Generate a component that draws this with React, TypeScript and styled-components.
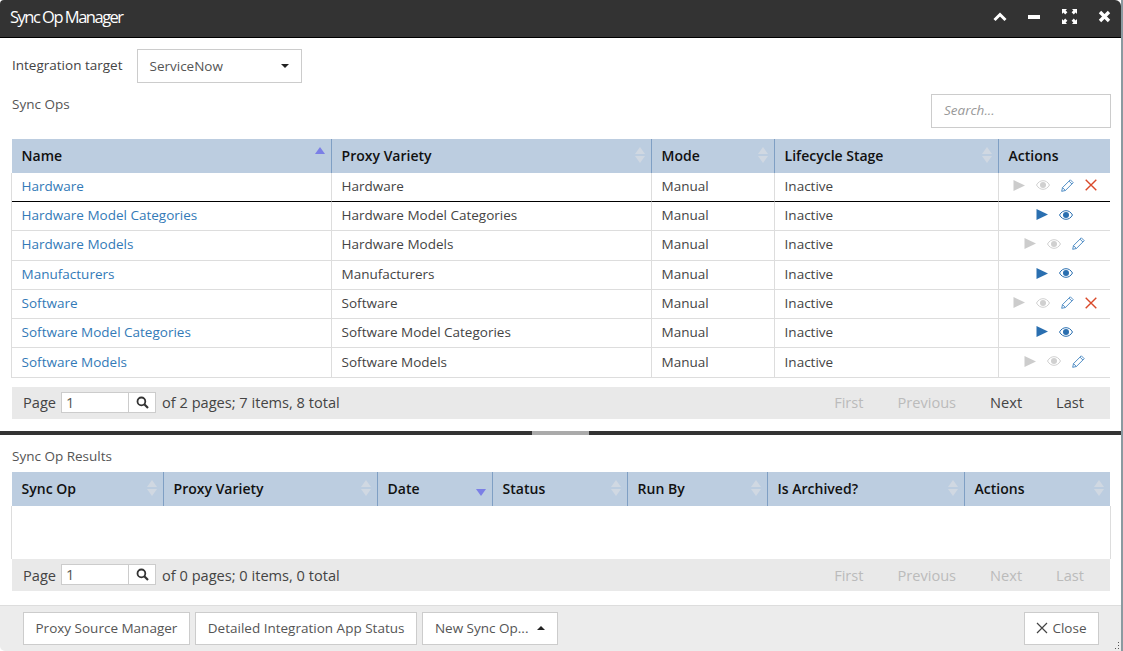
import React from 'react';
import styled, { createGlobalStyle } from 'styled-components';

const GlobalStyle = createGlobalStyle`
  html, body {
    margin: 0;
    padding: 0;
    background: #fff;
  }
  body {
    font-family: "Open Sans", "Liberation Sans", sans-serif;
    font-size: 13.5px;
    color: #333;
  }
`;

const Win = styled.div`
  width: 1123px;
  height: 651px;
  box-sizing: border-box;
  border-right: 2px solid #8a9aa0;
  background: #fff;
  display: flex;
  flex-direction: column;
  overflow: hidden;
  position: relative;
`;

const TitleBar = styled.div`
  height: 38px;
  flex: none;
  box-sizing: border-box;
  background: #333;
  border-bottom: 1px solid #000;
  border-radius: 4px 6px 0 0;
  display: flex;
  align-items: center;
  justify-content: space-between;
  padding: 0 10px 4px 10px;
`;

const Title = styled.div`
  color: #fff;
  font-size: 16.5px;
  letter-spacing: -1.5px;
`;

const TitleIcons = styled.div`
  display: flex;
  align-items: center;
  gap: 21.5px;
`;

const TopPane = styled.div`
  height: 393px;
  flex: none;
  box-sizing: border-box;
  padding: 11px 10px 0 12px;
  display: flex;
  flex-direction: column;
`;

const TargetRow = styled.div`
  display: flex;
  align-items: center;
  gap: 15px;
  height: 34px;
  flex: none;
`;

const FieldLabel = styled.span`
  color: #444;
  font-size: 13.5px;
  margin-top: -3px;
`;

const Select = styled.div`
  width: 165px;
  height: 34px;
  box-sizing: border-box;
  border: 1px solid #ccc;
  padding: 0 12px 1px 11px;
  display: flex;
  align-items: center;
  justify-content: space-between;
  font-size: 13.5px;
  color: #555;
`;

const Caret = styled.span<{ $up?: boolean }>`
  width: 0;
  height: 0;
  border-left: 4.5px solid transparent;
  border-right: 4.5px solid transparent;
  ${(p) => (p.$up ? 'border-bottom: 4.5px solid #222;' : 'border-top: 4.5px solid #222;')}
`;

const MenuCaret = styled(Caret)`
  margin-left: 5px;
`;

const OpsHead = styled.div`
  display: flex;
  justify-content: space-between;
  height: 45px;
  flex: none;
  margin-top: 11px;
`;

const SectionLabel = styled.div`
  color: #555;
  font-size: 13.5px;
  line-height: 18px;
`;

const OpsLabel = styled(SectionLabel)`
  margin-top: 1px;
`;

const SearchBox = styled.div`
  width: 180px;
  height: 34px;
  box-sizing: border-box;
  border: 1px solid #ccc;
  padding: 0 12px 2px;
  display: flex;
  align-items: center;
  font-size: 13.5px;
  font-style: italic;
  color: #999;
`;

const Table = styled.table`
  width: 1098px;
  flex: none;
  border-collapse: separate;
  border-spacing: 0;
  table-layout: fixed;
`;

const Th = styled.th`
  position: relative;
  height: 34px;
  box-sizing: border-box;
  padding: 0 9.6px 2px;
  background: #bccde0;
  border-right: 1px solid #7f9fc4;
  text-align: left;
  font-size: 14px;
  font-weight: 600;
  color: #111;
  &:last-child {
    border-right: none;
  }
`;

const Td = styled.td<{ $strong?: boolean }>`
  height: ${(p) => (p.$strong ? 29 : 29.3)}px;
  box-sizing: border-box;
  padding: 0 9.6px ${(p) => (p.$strong ? 2.5 : 2)}px;
  border-right: 1px solid #ddd;
  border-bottom: 1px solid ${(p) => (p.$strong ? '#000' : '#ddd')};
  font-size: 13.5px;
  color: #444;
  white-space: nowrap;
  &:first-child {
    box-shadow: -1px 0 0 #ddd;
  }
  &:last-child {
    border-right: none;
  }
`;

const NameLink = styled.a`
  color: #337ab7;
  text-decoration: none;
`;

const ActionsWrap = styled.div`
  display: flex;
  justify-content: center;
  align-items: center;
  gap: 11px;
  height: 100%;
  margin-top: -1px;
`;

const Sort = styled.span`
  position: absolute;
  right: 6px;
  top: 8px;
  display: flex;
  flex-direction: column;
  gap: 2px;
`;

const Tri = styled.span<{ $dir: 'up' | 'down'; $on?: boolean; $off?: boolean }>`
  width: 0;
  height: 0;
  border-left: 5px solid transparent;
  border-right: 5px solid transparent;
  visibility: ${(p) => (p.$off ? 'hidden' : 'visible')};
  ${(p) =>
    `border-${p.$dir === 'up' ? 'bottom' : 'top'}: 7.5px solid ${p.$on ? '#7b7fe6' : '#d0d8e2'};`}
`;

const Pager = styled.div<{ $gap: number }>`
  width: 1098px;
  height: 32px;
  flex: none;
  margin-top: ${(p) => p.$gap}px;
  background: #e9e9e9;
  display: flex;
  align-items: center;
  justify-content: space-between;
  padding: 0 26px 1px 11px;
  box-sizing: border-box;
`;

const PagerLeft = styled.div`
  display: flex;
  align-items: center;
  font-size: 14.6px;
  color: #444;
`;

const PageInput = styled.div`
  width: 68px;
  height: 21px;
  box-sizing: border-box;
  margin-left: 5px;
  background: #fff;
  border: 1px solid #ccc;
  padding-left: 4px;
  line-height: 19px;
  color: #555;
`;

const PageSearch = styled.div`
  width: 27px;
  height: 21px;
  box-sizing: border-box;
  background: #fff;
  border: 1px solid #ccc;
  border-left: none;
  margin-right: 6px;
  display: flex;
  align-items: center;
  justify-content: center;
`;

const PagerNav = styled.div`
  display: flex;
  gap: 34px;
`;

const NavItem = styled.span<{ $off?: boolean }>`
  font-size: 14.6px;
  color: ${(p) => (p.$off ? '#bbb' : '#444')};
`;

const Splitter = styled.div`
  height: 4px;
  flex: none;
  background: #333;
  display: flex;
  justify-content: center;
`;

const SplitHandle = styled.div`
  width: 57px;
  height: 100%;
  background: #aaa;
  margin-right: 1px;
`;

const BottomPane = styled.div`
  flex: 1;
  box-sizing: border-box;
  padding: 12px 12px 0;
  display: flex;
  flex-direction: column;
`;

const ResultsLabel = styled(SectionLabel)`
  height: 25px;
  flex: none;
`;

const EmptyBody = styled.div`
  width: 1098px;
  height: 53px;
  flex: none;
  box-shadow: -1px 0 0 #ddd, 1px 0 0 #ddd;
`;

const Footer = styled.div`
  height: 46px;
  flex: none;
  box-sizing: border-box;
  background: #ececec;
  border-top: 1px solid #ddd;
  border-bottom-left-radius: 5px;
  padding: 6px 22px 0 23px;
  display: flex;
  align-items: flex-start;
  gap: 5.5px;
  position: relative;
`;

const FootBtn = styled.div<{ $push?: boolean }>`
  height: 33px;
  box-sizing: border-box;
  background: #fff;
  border: 1px solid #ccc;
  padding: 0 11.5px 2px;
  display: flex;
  align-items: center;
  gap: 4px;
  font-size: 13.5px;
  color: #555;
  white-space: nowrap;
  ${(p) => (p.$push ? 'margin-left: auto;' : '')}
`;

const Grip = styled.span`
  position: absolute;
  right: 1px;
  bottom: 2px;
  width: 11px;
  height: 11px;
`;

const Play = ({ on }: { on: boolean }) => (
  <svg width="12" height="13" viewBox="0 0 12 13">
    <path d="M.5 1 12 6.5.5 12Z" fill={on ? '#2a6fb0' : '#ccc'} />
  </svg>
);

const Eye = ({ on }: { on: boolean }) => {
  const c = on ? '#2a6fb0' : '#d0d0d0';
  return (
    <svg width="14" height="10" viewBox="0 0 14 10">
      <path d="M.5 5C2.2 2 4.4.7 7 .7S11.8 2 13.5 5C11.8 8 9.6 9.3 7 9.3S2.2 8 .5 5Z" fill="none" stroke={c} strokeWidth="1" />
      <circle cx="7" cy="5" r="3" fill={c} />
    </svg>
  );
};

const Pencil = () => (
  <svg width="13" height="13" viewBox="0 0 13 13">
    <path d="M.7 12.3 1.5 8.6 9.3.8 12.2 3.7 4.4 11.5Z M8 2.1 10.9 5 M1.5 8.6 4.4 11.5" fill="none" stroke="#3f82c0" strokeWidth="0.9" strokeLinejoin="round" />
  </svg>
);

const Cross = () => (
  <svg width="12" height="12" viewBox="0 0 12 12">
    <path d="M.7.7 11.3 11.3 M11.3.7.7 11.3" stroke="#d9492a" strokeWidth="1.4" />
  </svg>
);

const Magnifier = () => (
  <svg width="13" height="13" viewBox="0 0 13 13">
    <circle cx="5.4" cy="5.4" r="3.9" fill="none" stroke="#333" strokeWidth="1.8" />
    <path d="M8.3 8.3 12 12" stroke="#333" strokeWidth="2.2" />
  </svg>
);

const columnsTop = [320, 320, 123, 224, 111];
const columnsBottom = [152, 214, 115, 135, 140, 197, 145];

type Row = { name: string; kind: 'all' | 'run' | 'edit' };

const rows: Row[] = [
  { name: 'Hardware', kind: 'all' },
  { name: 'Hardware Model Categories', kind: 'run' },
  { name: 'Hardware Models', kind: 'edit' },
  { name: 'Manufacturers', kind: 'run' },
  { name: 'Software', kind: 'all' },
  { name: 'Software Model Categories', kind: 'run' },
  { name: 'Software Models', kind: 'edit' },
];

const HeadCell = ({ label, sort, plain }: { label: string; sort?: 'up' | 'down'; plain?: boolean }) => (
  <Th>
    {label}
    {!plain && (
      <Sort>
        <Tri $dir="up" $on={sort === 'up'} $off={sort === 'down'} />
        <Tri $dir="down" $on={sort === 'down'} $off={sort === 'up'} />
      </Sort>
    )}
  </Th>
);

const RowActions = ({ kind }: { kind: Row['kind'] }) => (
  <ActionsWrap>
    <Play on={kind === 'run'} />
    <Eye on={kind === 'run'} />
    {kind !== 'run' && <Pencil />}
    {kind === 'all' && <Cross />}
  </ActionsWrap>
);

const PagerBar = ({ text, gap, active }: { text: string; gap: number; active: boolean }) => (
  <Pager $gap={gap}>
    <PagerLeft>
      Page
      <PageInput>1</PageInput>
      <PageSearch>
        <Magnifier />
      </PageSearch>
      {text}
    </PagerLeft>
    <PagerNav>
      <NavItem $off>First</NavItem>
      <NavItem $off>Previous</NavItem>
      <NavItem $off={!active}>Next</NavItem>
      <NavItem $off={!active}>Last</NavItem>
    </PagerNav>
  </Pager>
);

export default function App() {
  return (
    <>
      <GlobalStyle />
      <Win>
        <TitleBar>
          <Title>Sync Op Manager</Title>
          <TitleIcons>
            <svg width="14" height="10" viewBox="0 0 14 10">
              <path d="M1.5 8 7 2.5 12.5 8" fill="none" stroke="#fff" strokeWidth="3" />
            </svg>
            <svg width="12" height="4" viewBox="0 0 12 4">
              <rect width="12" height="4" fill="#fff" />
            </svg>
            <svg width="15" height="15" viewBox="0 0 15 15">
              <path d="M0 0H5L3.6 1.4 5.4 3.2 3.2 5.4 1.4 3.6 0 5Z M15 0V5L13.6 3.6 11.8 5.4 9.6 3.2 11.4 1.4 10 0Z M0 15V10L1.4 11.4 3.2 9.6 5.4 11.8 3.6 13.6 5 15Z M15 15H10L11.4 13.6 9.6 11.8 11.8 9.6 13.6 11.4 15 10Z" fill="#fff" />
            </svg>
            <svg width="13" height="13" viewBox="0 0 13 13">
              <path d="M2 2 11 11 M11 2 2 11" stroke="#fff" strokeWidth="3.4" />
            </svg>
          </TitleIcons>
        </TitleBar>

        <TopPane>
          <TargetRow>
            <FieldLabel>Integration target</FieldLabel>
            <Select>
              ServiceNow
              <Caret />
            </Select>
          </TargetRow>
          <OpsHead>
            <OpsLabel>Sync Ops</OpsLabel>
            <SearchBox>Search...</SearchBox>
          </OpsHead>
          <Table>
            <colgroup>
              {columnsTop.map((w, i) => (
                <col key={i} style={{ width: w }} />
              ))}
            </colgroup>
            <thead>
              <tr>
                <HeadCell label="Name" sort="up" />
                <HeadCell label="Proxy Variety" />
                <HeadCell label="Mode" />
                <HeadCell label="Lifecycle Stage" />
                <HeadCell label="Actions" plain />
              </tr>
            </thead>
            <tbody>
              {rows.map((r, i) => (
                <tr key={r.name}>
                  <Td $strong={i === 0}>
                    <NameLink href="#">{r.name}</NameLink>
                  </Td>
                  <Td $strong={i === 0}>{r.name}</Td>
                  <Td $strong={i === 0}>Manual</Td>
                  <Td $strong={i === 0}>Inactive</Td>
                  <Td $strong={i === 0}>
                    <RowActions kind={r.kind} />
                  </Td>
                </tr>
              ))}
            </tbody>
          </Table>
          <PagerBar text="of 2 pages; 7 items, 8 total" gap={9} active />
        </TopPane>

        <Splitter>
          <SplitHandle />
        </Splitter>

        <BottomPane>
          <ResultsLabel>Sync Op Results</ResultsLabel>
          <Table>
            <colgroup>
              {columnsBottom.map((w, i) => (
                <col key={i} style={{ width: w }} />
              ))}
            </colgroup>
            <thead>
              <tr>
                <HeadCell label="Sync Op" />
                <HeadCell label="Proxy Variety" />
                <HeadCell label="Date" sort="down" />
                <HeadCell label="Status" />
                <HeadCell label="Run By" />
                <HeadCell label="Is Archived?" />
                <HeadCell label="Actions" />
              </tr>
            </thead>
          </Table>
          <EmptyBody />
          <PagerBar text="of 0 pages; 0 items, 0 total" gap={0} active={false} />
        </BottomPane>

        <Footer>
          <FootBtn>Proxy Source Manager</FootBtn>
          <FootBtn>Detailed Integration App Status</FootBtn>
          <FootBtn>
            New Sync Op...
            <MenuCaret $up />
          </FootBtn>
          <FootBtn $push>
            <svg width="12" height="12" viewBox="0 0 12 12">
              <path d="M1 1 11 11 M11 1 1 11" stroke="#444" strokeWidth="1.2" />
            </svg>
            Close
          </FootBtn>
          <Grip>
            <svg width="11" height="11" viewBox="0 0 11 11">
              <path d="M9 1H10V2H9Z M9 4H10V5H9Z M6 7H7V8H6Z M9 7H10V8H9Z M0 10H1V11H0Z M3 10H4V11H3Z M6 10H7V11H6Z M9 10H10V11H9Z" fill="#555" />
            </svg>
          </Grip>
        </Footer>
      </Win>
    </>
  );
}
